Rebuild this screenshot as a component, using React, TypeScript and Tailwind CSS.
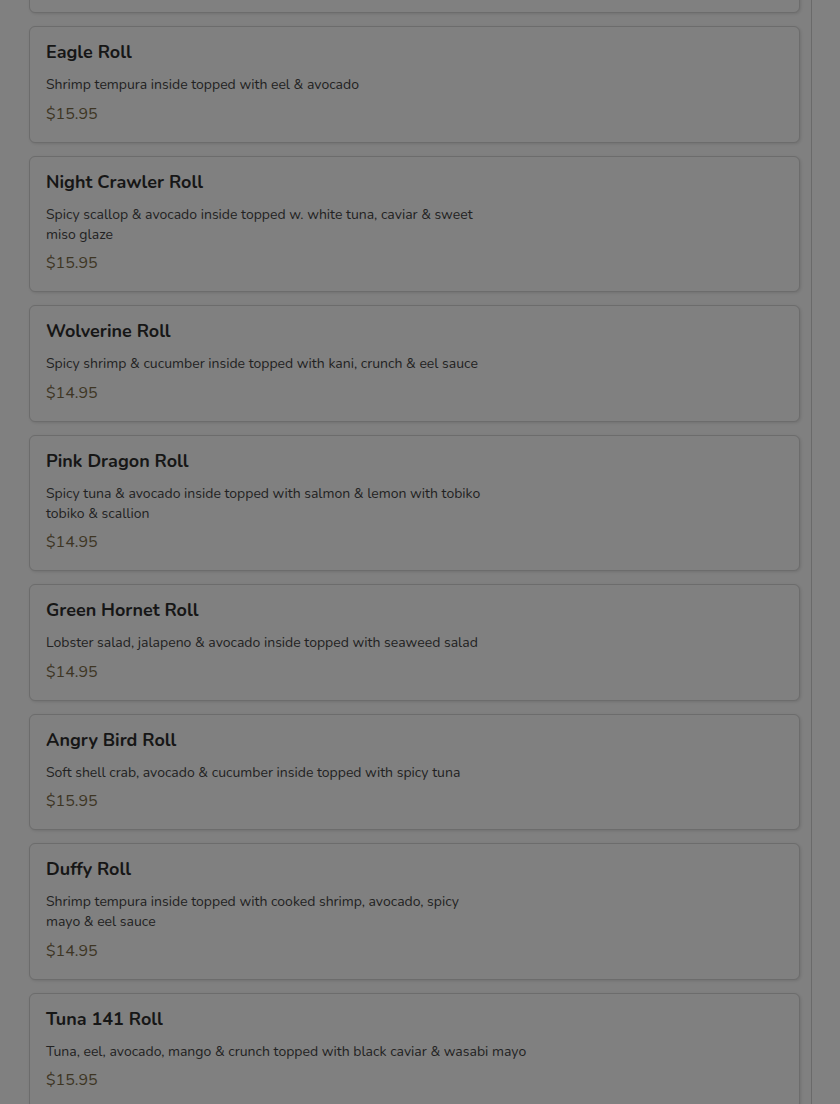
import React from "react";

type Item = { name: string; desc: string; price: string };

const items: Item[] = [
  { name: "Eagle Roll", desc: "Shrimp tempura inside topped with eel & avocado", price: "$15.95" },
  { name: "Night Crawler Roll", desc: "Spicy scallop & avocado inside topped w. white tuna, caviar & sweet\nmiso glaze", price: "$15.95" },
  { name: "Wolverine Roll", desc: "Spicy shrimp & cucumber inside topped with kani, crunch & eel sauce", price: "$14.95" },
  { name: "Pink Dragon Roll", desc: "Spicy tuna & avocado inside topped with salmon & lemon with tobiko\ntobiko & scallion", price: "$14.95" },
  { name: "Green Hornet Roll", desc: "Lobster salad, jalapeno & avocado inside topped with seaweed salad", price: "$14.95" },
  { name: "Angry Bird Roll", desc: "Soft shell crab, avocado & cucumber inside topped with spicy tuna", price: "$15.95" },
  { name: "Duffy Roll", desc: "Shrimp tempura inside topped with cooked shrimp, avocado, spicy\nmayo & eel sauce", price: "$14.95" },
  { name: "Tuna 141 Roll", desc: "Tuna, eel, avocado, mango & crunch topped with black caviar & wasabi mayo", price: "$15.95" },
];

const card =
  "rounded-md border border-[#6c6c6c] bg-[#808080] shadow-[1px_1px_3px_rgba(0,0,0,0.12)]";

export default function App() {
  return (
    <div
      className="h-[1104px] w-[840px] overflow-hidden bg-[#808080] flex"
      style={{ fontFamily: '"Nunito", "Lato", "Noto Sans", sans-serif' }}
    >
      <div className="w-[812px] shrink-0 border-r border-[#6a6a6a] pl-[29px] pr-[11px]">
        <div className="mt-[-104px] flex flex-col gap-[13px]">
          <div className={`${card} h-[117px]`} />
          {items.map((it) => (
            <div key={it.name} className={`${card} px-4 pt-4 pb-4`}>
              <div className="text-[18px] leading-[18px] font-bold text-[#161616] mb-[14px]">
                {it.name}
              </div>
              <div className="text-[14px] leading-5 text-[#222222] whitespace-pre-line">
                {it.desc}
              </div>
              <div className="mt-[6.5px] text-[16px] leading-6 text-[#3d3524]">{it.price}</div>
            </div>
          ))}
        </div>
      </div>
      <div className="flex-1 bg-[#818181]" />
    </div>
  );
}
